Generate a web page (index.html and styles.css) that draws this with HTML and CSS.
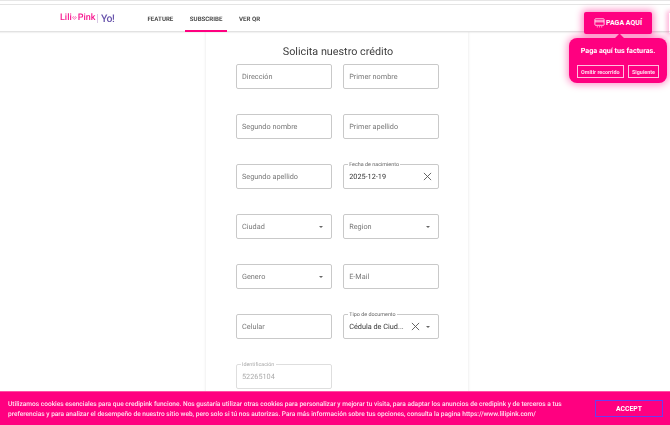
FILE: index.html
```html
<!DOCTYPE html>
<html lang="es">
<head>
<meta charset="utf-8">
<title>Solicita nuestro crédito</title>
<link rel="stylesheet" href="styles.css">
</head>
<body>
<div class="topstrip"></div>
<header class="header">
  <div class="logo">
    <span class="logo-lili">Lili<svg class="logo-heart" viewBox="0 0 8 6"><path d="M1 1.6 C2 .4 3.4 .8 4 2 C4.6 .8 6.5 .6 7 1.8 C7 3.4 5 4.6 3.8 5 C2.6 4.4 .8 3.2 1 1.6Z" fill="none" stroke="#f7168f" stroke-width=".9"/></svg>Pink</span>
    <span class="logo-sep"></span>
    <span class="logo-yo">Yo!</span>
  </div>
  <nav class="nav">
    <a class="nav-link">FEATURE</a>
    <a class="nav-link nav-active">SUBSCRIBE</a>
    <a class="nav-link">VER QR</a>
  </nav>
  <button class="pay">
    <svg class="pay-icon" viewBox="0 0 14 13"><rect x="1" y="1" width="12" height="8.5" rx="1" fill="none" stroke="#fff" stroke-width="1"/><path d="M1 3.6h12M1 5h12" stroke="#fff" stroke-width="1"/><path d="M3.5 11.5h1.4M6.3 11.5h1.4M9.1 11.5h1.4" stroke="#fff" stroke-width="1"/></svg>
    PAGA AQUÍ
  </button>
  <span class="pay-next"></span>
</header>

<div class="tour">
  <span class="tour-arrow"></span>
  <p class="tour-text">Paga aquí tus facturas.</p>
  <div class="tour-actions">
    <button class="tour-btn">Omitir recorrido</button>
    <button class="tour-btn">Siguiente</button>
  </div>
</div>

<main class="card">
  <h1 class="title">Solicita nuestro crédito</h1>
  <form class="grid">
    <div class="field"><span class="ph">Dirección</span></div>
    <div class="field"><span class="ph">Primer nombre</span></div>
    <div class="field"><span class="ph">Segundo nombre</span></div>
    <div class="field"><span class="ph">Primer apellido</span></div>
    <div class="field"><span class="ph">Segundo apellido</span></div>
    <div class="field">
      <span class="legend">Fecha de nacimiento</span>
      <span class="val">2025-12-19</span>
      <svg class="clear" viewBox="0 0 8 8"><path d="M.8.8l6.4 6.4M7.2.8L.8 7.2" stroke="#555" stroke-width=".8" fill="none"/></svg>
    </div>
    <div class="field"><span class="ph">Ciudad</span><span class="caret"></span></div>
    <div class="field"><span class="ph">Region</span><span class="caret"></span></div>
    <div class="field"><span class="ph">Genero</span><span class="caret"></span></div>
    <div class="field"><span class="ph">E-Mail</span></div>
    <div class="field"><span class="ph">Celular</span></div>
    <div class="field">
      <span class="legend">Tipo de documento</span>
      <span class="val">Cédula de Ciud...</span>
      <svg class="clear clear-sel" viewBox="0 0 8 8"><path d="M.8.8l6.4 6.4M7.2.8L.8 7.2" stroke="#555" stroke-width=".8" fill="none"/></svg>
      <span class="caret"></span>
    </div>
    <div class="field field-off">
      <span class="legend legend-off">Identificación</span>
      <span class="val val-off">52265104</span>
    </div>
  </form>
</main>

<aside class="cookies">
  <p class="cookies-text">Utilizamos cookies esenciales para que credipink funcione. Nos gustaría utilizar otras cookies para personalizar y mejorar tu visita, para adaptar los anuncios de credipink y de terceros a tus preferencias y para analizar el desempeño de nuestro sitio web, pero solo si tú nos autorizas. Para más información sobre tus opciones, consulta la pagina https://www.lilipink.com/</p>
  <button class="accept">ACCEPT</button>
</aside>
</body>
</html>
```

FILE: styles.css
```css
* { box-sizing: border-box; }
html, body { height: 100%; }
body {
  margin: 0;
  overflow: hidden;
  background: #fff;
  font-family: Roboto, "Liberation Sans", sans-serif;
  color: #444;
  text-rendering: geometricPrecision;
}
.topstrip {
  height: 5px;
  background: #fff;
  border-top: 1px solid #e6e6e6;
  border-bottom: 1px solid #e4e4e4;
}
.header {
  height: 27px;
  display: flex;
  align-items: center;
  padding-left: 60px;
  border-bottom: 1px solid #e2e2e2;
  box-shadow: 0 1px 1px rgba(0,0,0,.05);
  position: relative;
  background: #fff;
}
.logo { display: flex; align-items: center; width: 82.5px; height: 14px; will-change: transform; }
.logo-lili {
  color: #f7168f;
  font-size: 9px;
  font-weight: 500;
  display: flex;
  align-items: center;
}
.logo-heart { width: 5px; height: 4px; margin: 0 .5px; }
.logo-sep { width: 1px; height: 9px; background: #d9c8e4; margin: 0 3px 0 1.5px; }
.logo-yo {
  color: #6a56ad;
  font-size: 10.5px;
  font-weight: 500;
  letter-spacing: -.5px;
}
.nav { display: flex; height: 100%; gap: 7.5px; will-change: transform; }
.nav-link {
  display: flex;
  align-items: center;
  padding: 0 4.5px;
  font-size: 6.15px;
  font-weight: 700;
  color: #4a4a4a;
  height: 27px;
}
.nav-active { border-bottom: 2px solid #ff0080; padding-top: 2px; }
.pay {
  position: absolute;
  left: 584px;
  top: 7px;
  width: 68px;
  height: 22px;
  display: flex;
  align-items: center;
  justify-content: center;
  gap: 1px;
  padding: 0;
  border: 0;
  border-radius: 2px;
  background: #ff0080;
  color: #fff;
  font: 700 7px Roboto, sans-serif;
  box-shadow: 0 0 7px 2px rgba(255,0,128,.45);
}
.pay-icon { width: 11px; height: 10px; }
.pay-next {
  position: absolute;
  right: 0;
  top: 8px;
  width: 1px;
  height: 20px;
  box-shadow: 0 0 5px 2px rgba(255,0,128,.35);
}
.tour {
  position: absolute;
  left: 569px;
  top: 38px;
  width: 98px;
  height: 45px;
  padding: 7px 8px;
  background: #ff0080;
  border-radius: 8px;
  box-shadow: 0 0 7px 2px rgba(255,0,128,.4);
  color: #fff;
  z-index: 2;
}
.tour-arrow {
  position: absolute;
  left: 47px;
  top: -3px;
  width: 7px;
  height: 7px;
  background: #ff0080;
  transform: rotate(45deg);
}
.tour-text { margin: 1px 0 0; font-size: 7.2px; font-weight: 700; text-align: center; white-space: nowrap; will-change: transform; }
.tour-actions { display: flex; justify-content: space-between; margin-top: 10px; will-change: transform; }
.tour-btn {
  height: 13px;
  padding: 0 3px;
  background: transparent;
  border: 1px solid rgba(255,255,255,.75);
  color: #ffd9ec;
  font: 700 5.4px Roboto, sans-serif;
  white-space: nowrap;
}
.card {
  width: 262px;
  height: 400px;
  margin-left: 206px;
  padding: 13px 28.5px 0 29.5px;
  background: #fff;
  box-shadow: 0 0 3px rgba(0,0,0,.11);
}
.title {
  margin: 0 0 5.3px;
  height: 14px;
  font-size: 10.8px;
  line-height: 14px;
  font-weight: 400;
  text-align: center;
  color: #3c3c3c;
  will-change: transform;
}
.grid {
  display: grid;
  grid-template-columns: 96.2px 96.3px;
  column-gap: 11px;
  grid-auto-rows: 25.4px;
  row-gap: 24.6px;
  will-change: transform;
}
.field {
  position: relative;
  display: flex;
  align-items: center;
  padding: 0 5px;
  border: 1px solid #c9c9c9;
  border-radius: 2px;
  font-size: 7.3px;
}
.ph { color: #777; flex: 1; }
.val { color: #333; flex: 1; white-space: nowrap; }
.val-off { color: #aaa; }
.field-off { border-color: #dedede; }
.legend {
  position: absolute;
  left: 3.5px;
  top: -3px;
  padding: 0 1.5px;
  background: #fff;
  color: #666;
  font-size: 5.4px;
  line-height: 6px;
  white-space: nowrap;
}
.legend-off { color: #aaa; }
.clear { width: 9px; height: 9px; margin-right: 1px; flex: none; }
.clear-sel { margin-right: 6px; }
.caret {
  width: 0;
  height: 0;
  margin-right: 3px;
  border-left: 2.5px solid transparent;
  border-right: 2.5px solid transparent;
  border-top: 2.5px solid #666;
  flex: none;
}
.cookies {
  position: fixed;
  left: 0;
  right: 0;
  bottom: 0;
  height: 34px;
  display: flex;
  align-items: center;
  padding: 0 7px 0 8px;
  background: #ff0080;
  border-top: 1px solid #ff4fa5;
  color: #fff;
  z-index: 3;
}
.cookies-text {
  margin: 0;
  width: 570px;
  font-size: 6.57px;
  font-weight: 500;
  line-height: 10px;
  color: #ffe3f1;
  will-change: transform;
}
.accept {
  margin-left: auto;
  width: 68px;
  height: 17px;
  padding: 0;
  background: transparent;
  border: 1px solid #6a3cf0;
  outline: 0;
  color: #fff;
  font: 700 6.8px Roboto, sans-serif;
  will-change: transform;
}
```
